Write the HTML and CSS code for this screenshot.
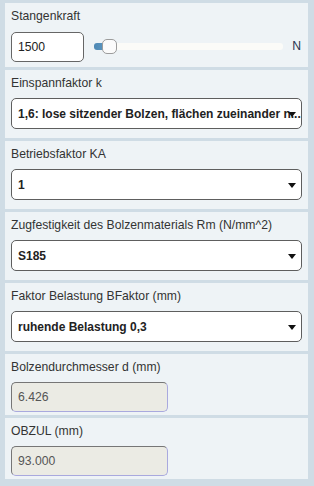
FILE: index.html
```html
<!DOCTYPE html>
<html lang="de">
<head>
  <meta charset="UTF-8">
  <meta name="viewport" content="width=device-width, initial-scale=1.0">
  <title>Bolzenberechnung</title>
  <link rel="stylesheet" href="styles.css">
</head>
<body>
  <div class="calc">
    <div class="field field-first">
      <label class="field-label" for="stangenkraft">Stangenkraft</label>
      <div class="slider-row">
        <input type="text" id="stangenkraft" class="num-input" value="1500">
        <div class="slider">
          <div class="slider-track"></div>
          <span class="slider-thumb"></span>
        </div>
        <span class="unit">N</span>
      </div>
    </div>

    <div class="field">
      <label class="field-label">Einspannfaktor k</label>
      <div class="select-box">
        <span class="select-value">1,6: lose sitzender Bolzen, flächen zueinander n...</span>
        <span class="select-arrow"></span>
      </div>
    </div>

    <div class="field">
      <label class="field-label">Betriebsfaktor KA</label>
      <div class="select-box">
        <span class="select-value">1</span>
        <span class="select-arrow"></span>
      </div>
    </div>

    <div class="field">
      <label class="field-label">Zugfestigkeit des Bolzenmaterials Rm (N/mm^2)</label>
      <div class="select-box">
        <span class="select-value">S185</span>
        <span class="select-arrow"></span>
      </div>
    </div>

    <div class="field">
      <label class="field-label">Faktor Belastung BFaktor (mm)</label>
      <div class="select-box">
        <span class="select-value">ruhende Belastung 0,3</span>
        <span class="select-arrow"></span>
      </div>
    </div>

    <div class="field field-output">
      <label class="field-label" for="durchmesser">Bolzendurchmesser d (mm)</label>
      <input type="text" id="durchmesser" class="out-input" value="6.426" readonly>
    </div>

    <div class="field field-output">
      <label class="field-label" for="obzul">OBZUL (mm)</label>
      <input type="text" id="obzul" class="out-input" value="93.000" readonly>
    </div>
  </div>
</body>
</html>
```

FILE: styles.css
```css
* {
  margin: 0;
  padding: 0;
  box-sizing: border-box;
  font-family: "Liberation Sans", Arial, sans-serif;
}

body {
  background-color: #cfdce5;
  color: #333;
}

.calc {
  display: flex;
  flex-direction: column;
  gap: 3px;
  padding: 3px 6px 0 5px;
}

/* Field panels */
.field {
  background: #eef3f6;
  padding: 5px 6px 9px 6px;
}

.field-label {
  display: block;
  font-size: 12.2px;
  line-height: 16px;
  margin-bottom: 7px;
  color: #333;
}

.field-first {
  padding-bottom: 5px;
}

.field-first .field-label {
  margin-bottom: 8px;
}

.field-output {
  padding-bottom: 3px;
}

/* Inputs */
.num-input {
  width: 73px;
  height: 30px;
  border: 1px solid #666;
  border-radius: 5px;
  padding: 0 6px;
  font-size: 12.2px;
  color: #222;
  background: white;
  outline: none;
}

.out-input {
  display: block;
  width: 157px;
  height: 30px;
  border: 1px solid;
  border-color: #767676 #a9a9de #a9a9de #767676;
  border-radius: 5px;
  padding: 0 6px;
  font-size: 12.2px;
  color: #555;
  background: #ebebe4;
  outline: none;
}

/* Slider */
.slider-row {
  display: flex;
  align-items: center;
}

.slider {
  position: relative;
  flex: 1;
  height: 15px;
  margin-left: 10px;
  margin-top: -1px;
}

.slider-track {
  margin-top: 4px;
  height: 7px;
  border-radius: 3px;
  background: linear-gradient(to right, #4d88b4 0, #5b95bf 10px, #fbfbf8 10px);
}

.slider-thumb {
  position: absolute;
  left: 8px;
  top: 0;
  width: 15px;
  height: 15px;
  border-radius: 5px;
  background: #fbfbfb;
  border: 1px solid #9c9c9c;
}

.unit {
  margin-left: 9px;
  margin-right: 1px;
  margin-top: -2px;
  font-size: 12.2px;
  color: #2b3552;
}

/* Select boxes */
.select-box {
  position: relative;
  display: flex;
  align-items: center;
  height: 31px;
  padding: 0 1px 0 6px;
  background: white;
  border: 1px solid #5e5e5e;
  border-radius: 5px;
}

.select-value {
  font-size: 12px;
  font-weight: bold;
  color: #222;
  white-space: nowrap;
}

.select-arrow {
  position: absolute;
  right: 5px;
  top: 50%;
  margin-top: -2px;
  width: 0;
  height: 0;
  border-left: 4.5px solid transparent;
  border-right: 4.5px solid transparent;
  border-top: 5px solid #111;
}
```
